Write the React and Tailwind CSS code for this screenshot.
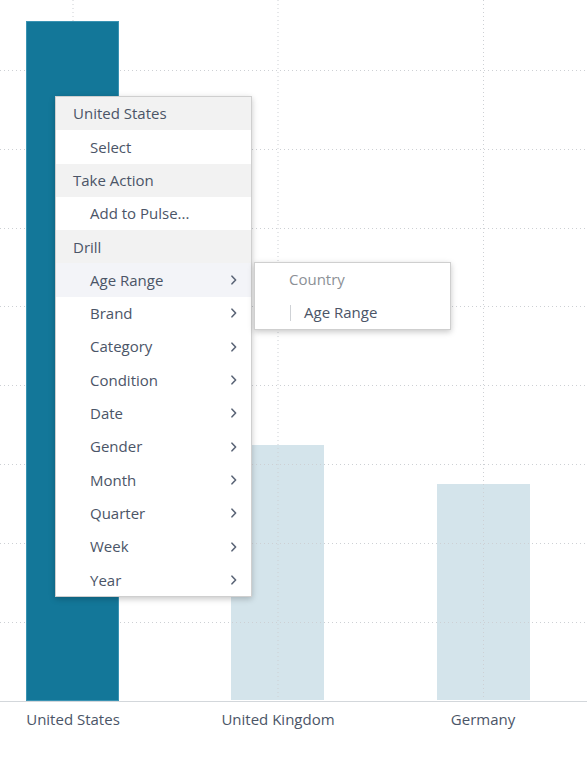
import React from "react";

const gridY = [70, 149, 228, 306, 385, 464, 543, 622];
const gridX = [73, 278, 483.5];

function Chevron() {
  return (
    <svg width="6" height="10" viewBox="0 0 6 10" className="shrink-0">
      <path d="M1 1.2 L4.6 5 L1 8.8" fill="none" stroke="#5b6577" strokeWidth="1.6" strokeLinecap="round" strokeLinejoin="round" />
    </svg>
  );
}

function Header({ children }) {
  return (
    <div className="h-[33.3px] flex items-center pl-[17px] bg-[#f2f2f2] text-[15px] text-[#4b5567]">
      {children}
    </div>
  );
}

function Item({ children, sub, active }) {
  return (
    <div
      className={
        active
          ? "h-[33.3px] flex items-center justify-between pl-[34px] pr-[14px] bg-[#f3f4f8] text-[15px] text-[#4b5567]"
          : "h-[33.3px] flex items-center justify-between pl-[34px] pr-[14px] bg-white text-[15px] text-[#4b5567]"
      }
    >
      <span>{children}</span>
      {sub && <Chevron />}
    </div>
  );
}

export default function App() {
  const drill = ["Brand", "Category", "Condition", "Date", "Gender", "Month", "Quarter", "Week", "Year"];
  return (
    <div
      className="relative w-[587px] h-[767px] bg-white overflow-hidden"
      style={{ fontFamily: '"Open Sans", "Noto Sans", sans-serif' }}
    >
      <svg width="587" height="702" className="block">
        <rect x="231" y="445" width="93" height="255" fill="#d4e4eb" />
        <rect x="437" y="484" width="93" height="216" fill="#d4e4eb" />
        {gridY.map((y) => (
          <line key={y} x1="0" x2="587" y1={y + 0.5} y2={y + 0.5} stroke="#cdd0d4" strokeWidth="1" strokeDasharray="1 3" />
        ))}
        {gridX.map((x) => (
          <line key={x} x1={x} x2={x} y1="0" y2="700" stroke="#cdd0d4" strokeWidth="1" strokeDasharray="1 3" />
        ))}
        <rect x="26.5" y="21.5" width="92" height="679" fill="#137799" stroke="#3a93b3" strokeWidth="1" />
        <line x1="0" x2="587" y1="701.5" y2="701.5" stroke="#d3d7db" strokeWidth="1" />
      </svg>
      <div className="flex ml-[-29.5px] mt-[6px]">
        {["United States", "United Kingdom", "Germany"].map((l) => (
          <div key={l} className="w-[205px] text-center text-[15px] leading-[22px] text-[#4b5567]">
            {l}
          </div>
        ))}
      </div>

      <div className="absolute left-[55px] top-[96px] w-[197px] border border-[#cfcfcf] bg-white shadow-[0_2px_6px_rgba(0,0,0,0.22)]">
        <Header>United States</Header>
        <Item>Select</Item>
        <Header>Take Action</Header>
        <Item>Add to Pulse...</Item>
        <Header>Drill</Header>
        <Item sub active>Age Range</Item>
        {drill.map((d) => (
          <Item key={d} sub>
            {d}
          </Item>
        ))}
      </div>

      <div className="absolute left-[254px] top-[262px] w-[197px] border border-[#cfcfcf] bg-white shadow-[0_2px_6px_rgba(0,0,0,0.22)]">
        <div className="h-[33px] flex items-center pl-[34px] text-[15px] text-[#8c9096]">Country</div>
        <div className="h-[33px] flex items-center pl-[35px] text-[15px] text-[#4b5567]">
          <span className="w-px h-[16px] bg-[#cfd2d6] mr-[13px]" />
          <span>Age Range</span>
        </div>
      </div>
    </div>
  );
}
